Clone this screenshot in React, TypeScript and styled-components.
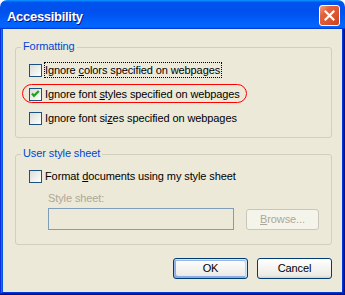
import React from 'react';
import styled, { createGlobalStyle } from 'styled-components';

const Global = createGlobalStyle`
  html, body { margin: 0; padding: 0; background: #ffffff; }
  body { font-family: "Liberation Sans", Arial, sans-serif; font-size: 11px; letter-spacing: -0.1px; color: #000; }
  * { box-sizing: border-box; }
`;

const Window = styled.div`
  width: 345px;
  height: 295px;
  display: flex;
  flex-direction: column;
`;

const TitleBar = styled.div`
  height: 29px;
  flex: none;
  display: flex;
  align-items: flex-start;
  justify-content: space-between;
  padding: 0 5px 0 7px;
  border-radius: 7px 7px 0 0;
  background: linear-gradient(180deg, #0997ff, #0053ee 8%, #0050ee 40%, #0066ff 88%, #0066ff 93%, #005bff 95%, #003dd7 96%, #003dd7);
`;

const Title = styled.div`
  margin-top: 9px;
  line-height: 16px;
  font-size: 13px;
  font-weight: 700;
  letter-spacing: -0.3px;
  color: #fff;
  text-shadow: 1px 1px #0f1089;
`;

const CloseButton = styled.div`
  margin-top: 5px;
  width: 21px;
  height: 21px;
  border: 1px solid #fff;
  border-radius: 3px;
  display: flex;
  align-items: center;
  justify-content: center;
  background: linear-gradient(135deg, #f4a285 0%, #e2603a 30%, #d9482200 100%), linear-gradient(135deg, #e25c35, #c93d17);
`;

const Frame = styled.div`
  flex: 1;
  display: flex;
  padding: 0 3px 3px;
  background: #0831d9;
  box-shadow: inset -1px -1px #00138c, inset 1px 0 #0831d9, inset -2px -2px #001ea0,
    inset 2px 0 #166aee, inset -3px -3px #003bda, inset 3px 0 #0855dd;
`;

const Body = styled.div`
  flex: 1;
  display: flex;
  flex-direction: column;
  background: #ece9d8;
  padding: 18px 10px 12px 12px;
`;

const GroupBox = styled.div<{ $pad: string; $mt?: number }>`
  position: relative;
  display: flex;
  flex-direction: column;
  border: 1px solid #d0d0bf;
  border-radius: 3px;
  padding: ${(p) => p.$pad};
  margin-top: ${(p) => p.$mt ?? 0}px;
`;

const Legend = styled.span`
  position: absolute;
  top: -8px;
  left: 5px;
  padding: 0 2px;
  line-height: 13px;
  background: #ece9d8;
  color: #0046d5;
`;

const CheckList = styled.div`
  display: flex;
  flex-direction: column;
  gap: 8px;
`;

const CheckRow = styled.div<{ $circled?: boolean }>`
  position: relative;
  align-self: flex-start;
  display: flex;
  align-items: center;
  height: 16px;
  &::before {
    content: '';
    display: ${(p) => (p.$circled ? 'block' : 'none')};
    position: absolute;
    left: -7px;
    right: -5px;
    top: -2px;
    bottom: -1px;
    border: 1px solid #ff0000;
    border-radius: 10px;
    pointer-events: none;
  }
`;

const Box = styled.span`
  flex: none;
  width: 13px;
  height: 13px;
  margin-right: 2px;
  border: 1px solid #1c5180;
  background: linear-gradient(135deg, #dcdcd7, #fff);
  display: flex;
`;

const LabelText = styled.span<{ $focused?: boolean }>`
  line-height: 14px;
  padding-right: 1px;
  border: 1px dotted ${(p) => (p.$focused ? '#000' : 'transparent')};
  white-space: nowrap;
`;

const SubLabel = styled.div`
  margin: 8px 0 0 19px;
  line-height: 13px;
  color: #aca899;
`;

const FileRow = styled.div`
  margin: 3px 0 0 19px;
  display: flex;
  align-items: center;
  gap: 12px;
`;

const TextField = styled.div`
  width: 186px;
  height: 22px;
  border: 1px solid #7f9db9;
  background: #ece9d8;
`;

const Button = styled.div<{ $w: number; $default?: boolean; $disabled?: boolean }>`
  width: ${(p) => p.$w}px;
  height: 21px;
  display: flex;
  align-items: center;
  justify-content: center;
  border-radius: 3px;
  line-height: 13px;
  border: 1px solid ${(p) => (p.$disabled ? '#c9c7ba' : '#003c74')};
  color: ${(p) => (p.$disabled ? '#aca899' : '#000')};
  background: ${(p) => (p.$disabled ? '#f5f4ea' : 'linear-gradient(180deg, #fff, #ecebe6 86%, #d6d0c5)')};
  box-shadow: ${(p) =>
    p.$default
      ? 'inset -1px 1px #cee7ff, inset 1px 2px #98b8ea, inset -2px 2px #bcd4f6, inset 1px -1px #89ade4, inset 2px -2px #89ade4'
      : 'none'};
`;

const Actions = styled.div`
  margin-top: 13px;
  display: flex;
  justify-content: flex-end;
  gap: 9px;
`;

const Check = () => (
  <svg width="11" height="11" viewBox="0 0 11 11">
    <polyline points="2,4.5 4,6.8 8.8,2" fill="none" stroke="#21a121" strokeWidth="2.2" />
  </svg>
);

const CloseX = () => (
  <svg width="11" height="11" viewBox="0 0 11 11">
    <path d="M1.5 1.5 L9.5 9.5 M9.5 1.5 L1.5 9.5" stroke="#fff" strokeWidth="2.2" strokeLinecap="square" />
  </svg>
);

export default function App() {
  return (
    <>
      <Global />
      <Window>
        <TitleBar>
          <Title>Accessibility</Title>
          <CloseButton>
            <CloseX />
          </CloseButton>
        </TitleBar>
        <Frame>
          <Body>
            <GroupBox $pad="14px 0 11px 13px">
              <Legend>Formatting</Legend>
              <CheckList>
                <CheckRow>
                  <Box />
                  <LabelText $focused>
                    Ignore <u>c</u>olors specified on webpages
                  </LabelText>
                </CheckRow>
                <CheckRow $circled>
                  <Box>
                    <Check />
                  </Box>
                  <LabelText>
                    Ignore font <u>s</u>tyles specified on webpages
                  </LabelText>
                </CheckRow>
                <CheckRow>
                  <Box />
                  <LabelText>
                    Ignore font si<u>z</u>es specified on webpages
                  </LabelText>
                </CheckRow>
              </CheckList>
            </GroupBox>
            <GroupBox $pad="13px 0 14px 13px" $mt={16}>
              <Legend>User style sheet</Legend>
              <CheckRow>
                <Box />
                <LabelText>
                  Format <u>d</u>ocuments using my style sheet
                </LabelText>
              </CheckRow>
              <SubLabel>Style sheet:</SubLabel>
              <FileRow>
                <TextField />
                <Button $w={73} $disabled>
                  <span>
                    <u>B</u>rowse...
                  </span>
                </Button>
              </FileRow>
            </GroupBox>
            <Actions>
              <Button $w={75} $default>
                OK
              </Button>
              <Button $w={75}>Cancel</Button>
            </Actions>
          </Body>
        </Frame>
      </Window>
    </>
  );
}
